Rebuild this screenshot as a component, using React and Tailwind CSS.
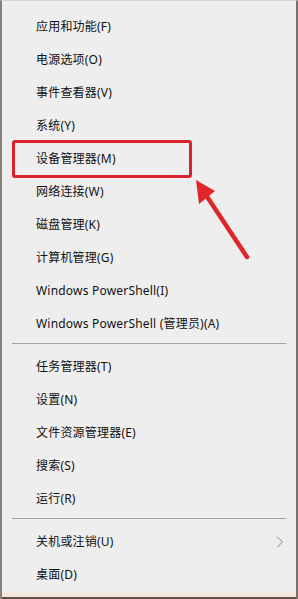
import { ChevronRight } from "lucide-react";

const groupA = [
  "应用和功能(F)",
  "电源选项(O)",
  "事件查看器(V)",
  "系统(Y)",
  "设备管理器(M)",
  "网络连接(W)",
  "磁盘管理(K)",
  "计算机管理(G)",
  "Windows PowerShell(I)",
  "Windows PowerShell (管理员)(A)",
];

const groupB = ["任务管理器(T)", "设置(N)", "文件资源管理器(E)", "搜索(S)", "运行(R)"];

function Item({ label, highlight, sub }) {
  return (
    <div className="relative flex h-[33px] items-center pl-[34px] pr-[6px]">
      {highlight && (
        <div className="absolute left-[10px] top-[-2px] h-[38px] w-[180px] rounded-[3px] border-[3px] border-[#d8232f]" />
      )}
      <span className="flex-1 tracking-[0.2px]">{label}</span>
      {sub && <ChevronRight size={20} strokeWidth={1} className="text-[#707070]" />}
    </div>
  );
}

function Separator() {
  return (
    <div className="pt-[3px] pb-[6px] px-[10px]">
      <div className="h-px bg-[#a4a4a4]" />
    </div>
  );
}

export default function App() {
  return (
    <div
      className="relative w-[298px] h-[599px] overflow-hidden bg-[#eeeeee] text-[12px] text-[#111111]"
      style={{ fontFamily: '"Noto Sans", "Noto Sans CJK SC", sans-serif' }}
    >
      <div className="flex h-full flex-col border-l-2 border-r-2 border-t border-l-[#8b8078] border-r-[#7a6e66] border-t-[#d8d4d0]">
        <div className="flex-1 pt-[9px]">
          {groupA.map((label) => (
            <Item key={label} label={label} highlight={label === "设备管理器(M)"} />
          ))}
          <Separator />
          {groupB.map((label) => (
            <Item key={label} label={label} />
          ))}
          <Separator />
          <Item label="关机或注销(U)" sub />
          <Item label="桌面(D)" />
        </div>
        <div className="h-[4px] bg-[#f3e5da]" />
        <div className="h-[2px] bg-[#5e5047]" />
      </div>

      {/* red annotation arrow */}
      <svg className="absolute left-0 top-0" width="298" height="599" viewBox="0 0 298 599">
        <line x1="247" y1="257" x2="204" y2="192" stroke="#e0262b" strokeWidth="4.5" strokeLinecap="round" />
        <polygon points="196,180 215,191 199,204" fill="#e0262b" />
      </svg>
    </div>
  );
}
